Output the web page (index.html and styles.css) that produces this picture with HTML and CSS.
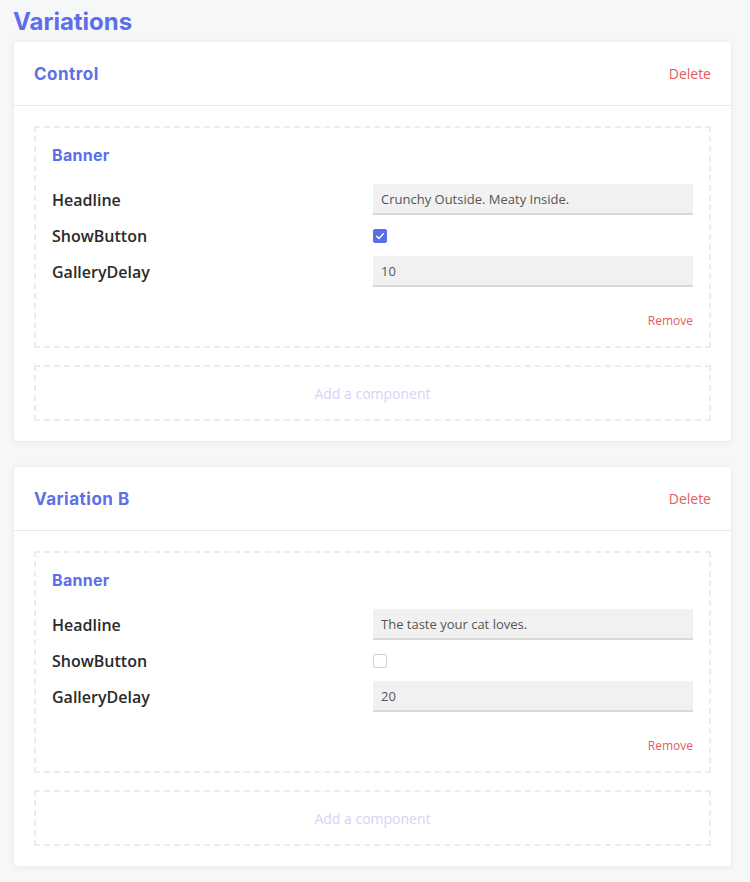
FILE: index.html
```html
<!DOCTYPE html>
<html lang="en">
<head>
<meta charset="utf-8">
<title>Variations</title>
<link rel="stylesheet" href="styles.css">
</head>
<body>
<main class="page">
  <h1 class="page-title">Variations</h1>

  <section class="card">
    <header class="card-header">
      <h2 class="card-title">Control</h2>
      <a class="danger-link delete">Delete</a>
    </header>
    <div class="card-body">
      <div class="component">
        <h3 class="component-title">Banner</h3>
        <div class="fields">
          <div class="field">
            <label class="field-label">Headline</label>
            <input class="text-input" type="text" value="Crunchy Outside. Meaty Inside." readonly>
          </div>
          <div class="field">
            <label class="field-label">ShowButton</label>
            <div class="field-control"><span class="checkbox checked"><svg viewBox="0 0 14 14" width="14" height="14"><path d="M3.6 7.2 L6 9.4 L10.4 4.8" fill="none" stroke="#fff" stroke-width="1.4" stroke-linecap="round" stroke-linejoin="round"/></svg></span></div>
          </div>
          <div class="field">
            <label class="field-label">GalleryDelay</label>
            <input class="text-input" type="text" value="10" readonly>
          </div>
        </div>
        <div class="component-actions"><a class="danger-link remove">Remove</a></div>
      </div>
      <div class="add-component">Add a component</div>
    </div>
  </section>

  <section class="card">
    <header class="card-header">
      <h2 class="card-title">Variation B</h2>
      <a class="danger-link delete">Delete</a>
    </header>
    <div class="card-body">
      <div class="component">
        <h3 class="component-title">Banner</h3>
        <div class="fields">
          <div class="field">
            <label class="field-label">Headline</label>
            <input class="text-input" type="text" value="The taste your cat loves." readonly>
          </div>
          <div class="field">
            <label class="field-label">ShowButton</label>
            <div class="field-control"><span class="checkbox"></span></div>
          </div>
          <div class="field">
            <label class="field-label">GalleryDelay</label>
            <input class="text-input" type="text" value="20" readonly>
          </div>
        </div>
        <div class="component-actions"><a class="danger-link remove">Remove</a></div>
      </div>
      <div class="add-component">Add a component</div>
    </div>
  </section>
</main>
</body>
</html>
```

FILE: styles.css
```css
* { box-sizing: border-box; }

html, body {
  margin: 0;
  padding: 0;
  background: #f6f7f9;
}

body {
  font-family: "Open Sans", "Noto Sans", sans-serif;
  color: #2a2a2a;
}

.page {
  padding: 0 19px 16px 14px;
}

.page-title {
  margin: 0 0 0 -1px;
  padding: 4px 0 0 0;
  height: 42px;
  line-height: 36px;
  font-family: "Inter", "Noto Sans", sans-serif;
  font-size: 24px;
  font-weight: 700;
  letter-spacing: 0;
  color: #5c6fe8;
}

.card {
  background: #ffffff;
  border-radius: 3px;
  box-shadow: 0 1px 6px rgba(0, 0, 0, 0.07), 0 0 1px rgba(0, 0, 0, 0.05);
  margin-bottom: 26px;
}

.card-header {
  display: flex;
  align-items: center;
  justify-content: space-between;
  height: 64px;
  padding: 0 20px;
  border-bottom: 1px solid #e8e8ec;
}

.card-title {
  margin: 0;
  font-family: "Inter", "Noto Sans", sans-serif;
  font-size: 17px;
  font-weight: 700;
  letter-spacing: 0.5px;
  color: #5c6fe8;
}

.danger-link {
  color: #e35d5d;
  cursor: pointer;
}

.delete {
  font-size: 14px;
}

.card-body {
  padding: 20px 20px 20px;
  display: flex;
  flex-direction: column;
  gap: 17px;
}

.component {
  border: 2px dashed #ececf0;
  padding: 17px 16px 17px;
}

.component-title {
  margin: 0;
  font-family: "Inter", "Noto Sans", sans-serif;
  font-size: 16px;
  line-height: 20px;
  font-weight: 700;
  letter-spacing: 0.3px;
  color: #5c6fe8;
}

.fields {
  margin-top: 19px;
  display: flex;
  flex-direction: column;
  gap: 5px;
}

.field {
  display: flex;
  align-items: center;
  height: 31px;
}

.field-label {
  flex: 1;
  font-size: 16px;
  font-weight: 600;
  color: #2a2a2a;
}

.field-control {
  width: 320px;
  display: flex;
  align-items: center;
}

.text-input {
  width: 320px;
  height: 31px;
  border: none;
  border-bottom: 2px solid #d8d8d8;
  background: #f1f1f1;
  padding: 0 8px;
  font-family: "Open Sans", "Noto Sans", sans-serif;
  font-size: 13px;
  color: #555;
  outline: none;
}

.checkbox {
  display: inline-flex;
  width: 14px;
  height: 14px;
  border-radius: 2px;
  border: 1px solid #cfcfcf;
  background: #fff;
  margin-top: 1px;
}

.checkbox.checked {
  border: none;
  background: #5b6ee8;
}

.component-actions {
  display: flex;
  justify-content: flex-end;
  margin-top: 26px;
  line-height: 16px;
}

.remove {
  font-size: 12px;
}

.add-component {
  height: 56px;
  border: 2px dashed #ececf0;
  display: flex;
  align-items: center;
  justify-content: center;
  font-size: 14px;
  color: #d3d4f6;
}
```
